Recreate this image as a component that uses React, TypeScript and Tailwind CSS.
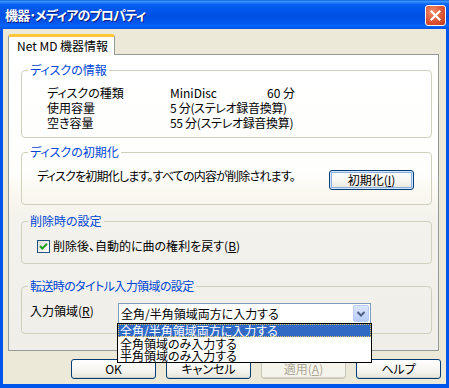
import React from "react"

const jp = "font-['Noto_Sans_CJK_JP',sans-serif] [font-feature-settings:'palt']"

function XpButton({ children, disabled, focused, className = "" }: { children: React.ReactNode; disabled?: boolean; focused?: boolean; className?: string }) {
  const base = "h-[20px] w-[85px] rounded-[3px] border flex items-center justify-center text-[12px] leading-[14px]"
  const look = disabled
    ? "border-[#C9C7BA] bg-[#F5F4EA] text-[#ACA899]"
    : "border-[#003C74] bg-[linear-gradient(to_bottom,#FFFFFF_0%,#F6F5F1_55%,#E6E4DA_100%)] text-black"
  const focus = focused ? "shadow-[inset_0_0_0_1px_#CEE7FF,inset_0_0_0_2px_#8CAEE6]" : "shadow-[inset_0_-1px_0_#D6D0C5]"
  return <div className={`${base} ${look} ${focus} ${className}`}>{children}</div>
}

function Group({ title, className = "", titleClass = "", children }: { title: string; className?: string; titleClass?: string; children: React.ReactNode }) {
  return (
    <fieldset className={`ml-[12px] w-[411px] rounded-[4px] border border-[#D0D0BF] p-0 ${className}`}>
      <legend className={`ml-[6px] px-[2px] text-[12px] leading-[14px] text-[#0046D5] ${titleClass}`}>{title}</legend>
      {children}
    </fieldset>
  )
}

export default function App() {
  return (
    <div className={`w-[449px] h-[388px] bg-[#0055EA] flex flex-col ${jp}`}>
      {/* title bar */}
      <div className="h-[29px] shrink-0 flex items-center bg-[linear-gradient(to_bottom,#0A5FE0_0%,#3D95FF_5%,#0A63F4_14%,#0058EE_30%,#0050E4_55%,#0056EC_78%,#0066FF_90%,#0050E0_100%)]">
        <span className="ml-[5px] text-[13px] leading-[16px] font-bold tracking-[-0.8px] text-white [text-shadow:1px_1px_#0A1882]">機器･メディアのプロパティ</span>
        <div className="ml-auto mr-[3px] mt-[1px] w-[21px] h-[21px] rounded-[3px] border border-white bg-[radial-gradient(circle_at_35%_30%,#F08C6A_0%,#DC5534_55%,#C0391A_100%)] flex items-center justify-center">
          <svg width="13" height="13" viewBox="0 0 13 13">
            <path d="M2.5 2.5 L10.5 10.5 M10.5 2.5 L2.5 10.5" stroke="white" strokeWidth="2.2" strokeLinecap="square" />
          </svg>
        </div>
      </div>

      {/* client area */}
      <div className="mx-[3px] mb-[4px] flex-1 bg-[#ECE9D8] flex flex-col">
        {/* tab strip */}
        <div className="mt-[5px] ml-[5px] h-[20px] flex">
          <div className="relative z-10 h-[21px] w-[107px] bg-white border-x border-[#919B9C] rounded-t-[3px] border-t-[3px] border-t-[#FFC83C] flex items-start">
            <span className="ml-[8px] mt-[2px] text-[12px] leading-[14px] text-black">Net MD 機器情報</span>
          </div>
        </div>

        {/* tab page */}
        <div className="ml-[5px] w-[431px] h-[297px] border border-[#919B9C] bg-[linear-gradient(to_bottom,#FFFFFF_0%,#FEFEFD_40%,#FAF8EF_47%,#F3F2EC_55%,#EFEEE8_100%)] flex flex-col text-[12px] leading-[14px] text-black">
          <Group title="ディスクの情報" className="mt-[8px] h-[75px]">
            <div className="pt-[8px] pl-[25px] flex flex-col leading-[15px]">
              <div className="flex">
                <span className="w-[123px]">ディスクの種類</span>
                <span className="w-[97px]">MiniDisc</span>
                <span>60 分</span>
              </div>
              <div className="flex">
                <span className="w-[123px]">使用容量</span>
                <span className="tracking-[-0.3px]">5 分(ステレオ録音換算)</span>
              </div>
              <div className="flex">
                <span className="w-[123px]">空き容量</span>
                <span className="tracking-[-0.3px]">55 分(ステレオ録音換算)</span>
              </div>
            </div>
          </Group>

          <Group title="ディスクの初期化" className="mt-[7px] h-[60px]">
            <div className="pt-[11px] pl-[15px] pr-[17px] flex items-start">
              <span className="mt-[-1px] tracking-[-0.8px]">ディスクを初期化します。すべての内容が削除されます。</span>
              <XpButton focused className="ml-auto">
                初期化(<span className="underline underline-offset-1">I</span>)
              </XpButton>
            </div>
          </Group>

          <Group title="削除時の設定" className="mt-[9px] h-[50px]">
            <div className="pt-[11px] pl-[15px] flex items-center">
              <div className="w-[13px] h-[13px] border border-[#1C5180] bg-[linear-gradient(135deg,#DCDCD7,#FFFFFF)] flex items-center justify-center">
                <svg width="11" height="11" viewBox="0 0 11 11">
                  <path d="M2 5 L4.3 7.5 L9 2.8" stroke="#21A121" strokeWidth="2" fill="none" />
                </svg>
              </div>
              <span className="ml-[3px]">
                削除後、自動的に曲の権利を戻す(<span className="underline underline-offset-1">B</span>)
              </span>
            </div>
          </Group>

          <Group title="転送時のタイトル入力領域の設定" titleClass="tracking-[-0.6px]" className="mt-[15px] h-[55px]">
            <div className="pt-[10px] pl-[8px] flex items-start">
              <span className="w-[88px] mt-[1px]">
                入力領域(<span className="underline underline-offset-1">R</span>)
              </span>
              <div className="relative w-[253px] h-[21px] border border-[#7F9DB9] bg-white flex items-center">
                <span className="pl-[2px] flex-1">全角/半角領域両方に入力する</span>
                <div className="mr-[1px] w-[16px] h-[17px] rounded-[2px] border border-[#B9CBF3] bg-[linear-gradient(to_bottom,#DCE7FD,#B6CBF7)] flex items-center justify-center">
                  <svg width="10" height="8" viewBox="0 0 10 8">
                    <path d="M1.5 2 L5 5.5 L8.5 2" stroke="#4D6185" strokeWidth="2" fill="none" />
                  </svg>
                </div>
                {/* open dropdown list */}
                <div className="absolute z-20 left-[-2px] top-[19px] w-[255px] border border-black bg-white flex flex-col">
                  <div className="h-[13px] leading-[13px] bg-[#316AC5] text-white outline outline-1 outline-dotted outline-[#F4C75A] -outline-offset-1 pl-[2px]">全角/半角領域両方に入力する</div>
                  <div className="h-[13px] leading-[13px] pl-[2px]">全角領域のみ入力する</div>
                  <div className="h-[12px] leading-[12px] pl-[2px]">半角領域のみ入力する</div>
                </div>
              </div>
            </div>
          </Group>
        </div>

        {/* dialog buttons */}
        <div className="mt-[8px] flex justify-end gap-[10px] pr-[5px]">
          <XpButton>OK</XpButton>
          <XpButton>キャンセル</XpButton>
          <XpButton disabled>
            適用(<span className="underline underline-offset-1">A</span>)
          </XpButton>
          <XpButton>ヘルプ</XpButton>
        </div>
      </div>
    </div>
  )
}
